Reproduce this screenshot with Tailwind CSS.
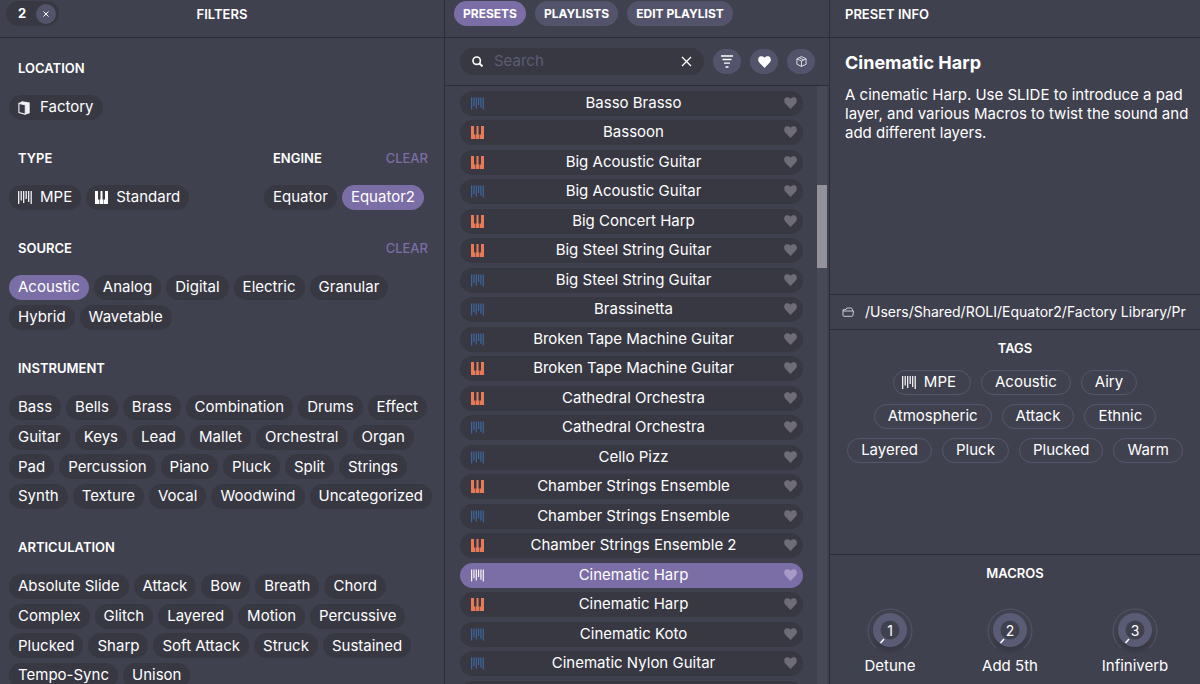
<!DOCTYPE html>
<html lang="en">
<head>
<meta charset="utf-8">
<title>Preset browser</title>
<script src="https://cdn.jsdelivr.net/npm/@tailwindcss/browser@4"></script>
</head>
<body class="h-screen overflow-hidden bg-[#40414e] font-['Inter','Liberation_Sans',sans-serif] text-[15px] text-white">
<svg class="hidden" aria-hidden="true">
  <symbol id="mpe" viewBox="0 0 14 13"><path d="M.7 0v13M3.200 0v9.500M5.700 0v12M8.200 0v8M10.700 0v11M13.200 0v13" stroke="currentColor" stroke-width="1.200" fill="none"/></symbol>
  <symbol id="keys" viewBox="0 0 13 13"><path d="M0 0h3v8.500h1.100V13H0zM5.500 0h2v8.500h1V13H4.600V8.500h.9zM10 0h3v13H9V8.500h1z" fill="currentColor"/></symbol>
  <symbol id="heart" viewBox="0 0 14 13"><path d="M7 13 1.300 7C-.6 4.900-.1 1.700 2 .6 4-.4 6 .3 7 2c1-1.700 3-2.400 5-1.400 2.100 1.100 2.600 4.300.7 6.400z" fill="currentColor"/></symbol>
</svg>
<main class="grid h-full grid-cols-[444fr_386fr_370fr]">
  <section class="flex min-w-0 flex-col overflow-hidden" aria-label="Filters">
    <header class="grid h-[38px] shrink-0 grid-cols-3 border-b border-[#2d2d38] px-[6px] pt-[1px]">
      <div class="flex h-[25px] w-[53px] items-center justify-between rounded-full bg-[#383843] pr-[3px] pl-3 text-[13px] font-bold">
        <span>2</span>
        <button aria-label="Clear all filters" class="grid size-5 place-items-center rounded-full bg-[#53546c]"><svg class="size-[6px]" viewBox="0 0 6 6"><path d="M.5.5l5 5M5.500.5l-5 5" stroke="#fff" stroke-width="1"/></svg></button>
      </div>
      <h2 class="text-center text-[13px] leading-[26px] font-semibold">FILTERS</h2>
    </header>
    <div id="filters" class="flex flex-col gap-7 px-[9px] pt-5"></div>
  </section>

  <section class="flex min-w-0 flex-col overflow-hidden border-x border-[#2d2d38]" aria-label="Presets">
    <nav class="flex h-[38px] shrink-0 gap-[9px] border-b border-[#2d2d38] px-[9px] pt-[1px] text-[12px] font-bold">
      <button class="h-[25px] rounded-full bg-[#7b6da6] px-[9px]">PRESETS</button>
      <button class="h-[25px] rounded-full bg-[#53546c] px-[9px]">PLAYLISTS</button>
      <button class="h-[25px] rounded-full bg-[#53546c] px-[9px]">EDIT PLAYLIST</button>
    </nav>
    <div class="flex h-12 shrink-0 items-center gap-[9px] border-b border-[#2d2d38] pr-[14px] pl-[15px]">
      <div class="flex h-[27px] min-w-0 flex-1 items-center rounded-full bg-[#383843] px-3">
        <svg class="size-[11px] shrink-0" viewBox="0 0 11 11"><circle cx="4.700" cy="4.700" r="3.700" fill="none" stroke="#fff" stroke-width="1.600"/><path d="M7.500 7.500l3 3" stroke="#fff" stroke-width="2"/></svg>
        <input aria-label="Search" placeholder="Search" class="ml-[11px] min-w-0 flex-1 bg-transparent outline-none placeholder:text-[#5b5c73]">
        <button aria-label="Clear search"><svg class="size-[11px]" viewBox="0 0 11 11"><path d="M1 1l9 9M10 1l-9 9" stroke="#fff" stroke-width="1.300"/></svg></button>
      </div>
      <button aria-label="Sort" class="grid h-[25px] w-7 place-items-center rounded-full bg-[#53546c]"><svg class="h-[13px] w-3" viewBox="0 0 12 13"><path d="M0 1h12M1.500 4.500h9M3 8.200h6M4.500 12h3" stroke="#fff" stroke-width="1.300"/></svg></button>
      <button aria-label="Favourites" class="grid h-[25px] w-7 place-items-center rounded-full bg-[#53546c]"><svg class="h-3 w-[13px]"><use href="#heart"/></svg></button>
      <button aria-label="Packs" class="grid h-[25px] w-7 place-items-center rounded-full bg-[#53546c]"><svg class="size-[11px]" viewBox="0 0 12 12"><path d="M6 .6l5 2.400v6L6 11.400 1 9V3zM1 3l5 2.500L11 3M6 5.500v5.900M3.500 1.800l5 2.500" fill="none" stroke="#e6e6ee" stroke-width="1"/></svg></button>
    </div>
    <div class="flex min-h-0 flex-1 overflow-hidden">
      <ul id="presets" class="min-w-0 flex-1 pt-[5px] pr-[14px] pl-[15px]"></ul>
      <div class="mr-[2px] w-[10px] bg-[#484957] pt-[99px]"><div class="h-[83px] bg-[#93929b]"></div></div>
    </div>
  </section>

  <section class="flex min-w-0 flex-col overflow-hidden" aria-label="Preset info">
    <header class="h-[38px] shrink-0 border-b border-[#2d2d38] px-[15px] pt-[1px]"><h2 class="text-[13px] leading-[26px] font-semibold">PRESET INFO</h2></header>
    <div class="h-[257px] shrink-0 border-b border-[#2d2d38] pt-[13px] pr-2 pl-[15px]">
      <h1 class="text-lg leading-6 font-bold">Cinematic Harp</h1>
      <p class="mt-[10px] leading-[19px]">A cinematic Harp. Use SLIDE to introduce a pad layer, and various Macros to twist the sound and add different layers.</p>
    </div>
    <div class="flex h-[35px] shrink-0 items-center gap-[11px] border-b border-[#2d2d38] pl-3">
      <svg class="h-[10px] w-3 shrink-0" viewBox="0 0 12 10"><path d="M1 4V2.800l3-.3.800-1.500h4.700l1 1.500V4M1 4h10.500l-.6 4.500q-.1.800-1 .8H2q-.9 0-1-.8z" fill="none" stroke="#d9d9e2" stroke-width=".9"/></svg>
      <span class="text-sm whitespace-nowrap">/Users/Shared/ROLI/Equator2/Factory Library/Pr</span>
    </div>
    <div class="h-[225px] shrink-0 border-b border-[#2d2d38] px-3 pt-2">
      <h2 class="text-center text-[13px] leading-5 font-semibold">TAGS</h2>
      <div id="tags" class="mt-3 flex flex-col gap-[9px]"></div>
    </div>
    <div class="flex-1 pt-2">
      <h2 class="text-center text-[13px] leading-5 font-semibold">MACROS</h2>
      <div id="macros" class="mt-[22px] grid grid-cols-[120fr_120fr_130fr]"></div>
    </div>
  </section>
</main>
<script>
const filters = [
  [['LOCATION', ['Factory'], 'h-[25px]']],
  [['TYPE', ['MPE', 'Standard'], 'h-[25px]'], ['ENGINE', ['Equator', 'Equator2'], 'h-[25px]']],
  [['SOURCE', ['Acoustic', 'Analog', 'Digital', 'Electric', 'Granular', 'Hybrid', 'Wavetable'], 'h-[55px]']],
  [['INSTRUMENT', ['Bass', 'Bells', 'Brass', 'Combination', 'Drums', 'Effect', 'Guitar', 'Keys', 'Lead', 'Mallet', 'Orchestral', 'Organ', 'Pad', 'Percussion', 'Piano', 'Pluck', 'Split', 'Strings', 'Synth', 'Texture', 'Vocal', 'Woodwind', 'Uncategorized'], 'h-[114px]']],
  [['ARTICULATION', ['Absolute Slide', 'Attack', 'Bow', 'Breath', 'Chord', 'Complex', 'Glitch', 'Layered', 'Motion', 'Percussive', 'Plucked', 'Sharp', 'Soft Attack', 'Struck', 'Sustained', 'Tempo-Sync', 'Unison'], 'h-[114px]']],
];
const icons = {
  Factory: '<svg class="mr-[10px] h-[14px] w-3" viewBox="0 0 12 14"><path d="M.6 2.300 4 .3l7.700 1.200v10.700L7.500 13.500V3.800z" fill="#f2f2f6"/><path d="M.9 2.500l6.400 1.300v9.400L.9 11.600z" fill="#383843" stroke="#f2f2f6" stroke-width="1.100"/></svg>',
  MPE: '<svg class="mr-2 h-[13px] w-[14px]"><use href="#mpe"/></svg>',
  Standard: '<svg class="mr-2 h-[13px] w-[13px]"><use href="#keys"/></svg>',
};
const on = new Set(['Equator2', 'Acoustic']);
const chip = n => `<button aria-pressed="${on.has(n)}" class="flex h-[25px] items-center rounded-full px-[9px] whitespace-nowrap ${on.has(n) ? 'bg-[#7b6da6]' : 'bg-[#383843]'}">${icons[n] || ''}${n}</button>`;
const clears = new Set(['ENGINE', 'SOURCE']);
document.getElementById('filters').innerHTML = filters.map(groups =>
  `<div class="flex justify-between">${groups.map(([h, items, height]) =>
    `<div class="${h === 'ENGINE' ? 'w-[171px]' : h === 'TYPE' ? '' : 'w-full'}"><div class="flex justify-between pr-[7px] pl-[9px] text-[13px] leading-5"><h3 class="font-semibold">${h}</h3>${clears.has(h) ? '<button class="font-medium text-[#7b6da6]">CLEAR</button>' : ''}</div>
    <div class="mt-[17px] flex flex-wrap content-between gap-x-[5px] ${height}">${items.map(chip).join('')}</div></div>`).join('')}</div>`).join('');

const presets = [['m','Basso Brasso'],['k','Bassoon'],['k','Big Acoustic Guitar'],['m','Big Acoustic Guitar'],['k','Big Concert Harp'],['k','Big Steel String Guitar'],['m','Big Steel String Guitar'],['m','Brassinetta'],['m','Broken Tape Machine Guitar'],['k','Broken Tape Machine Guitar'],['k','Cathedral Orchestra'],['m','Cathedral Orchestra'],['m','Cello Pizz'],['k','Chamber Strings Ensemble'],['m','Chamber Strings Ensemble'],['k','Chamber Strings Ensemble 2'],['m','Cinematic Harp'],['k','Cinematic Harp'],['m','Cinematic Koto'],['m','Cinematic Nylon Guitar'],['m','']];
document.getElementById('presets').innerHTML = presets.map(([t, n], i) => {
  const sel = i === 16;
  return `<li class="relative odd:mb-1 even:mb-[5px]"><button class="h-[25px] w-full rounded-full pl-1 ${sel ? 'bg-[#7b6da6]' : 'bg-[#383843]'}">${n}</button>
  <svg class="pointer-events-none absolute top-[6px] left-[11px] h-[13px] w-[13px] ${sel ? 'text-white' : t === 'm' ? 'text-[#3c6ba5]' : 'text-[#e97a55]'}"><use href="${t === 'm' ? '#mpe' : '#keys'}"/></svg>
  <button aria-label="Favourite" class="absolute top-[6px] right-[6px]"><svg class="block h-3 w-[13px] ${sel ? 'text-[#a899c9]' : 'text-[#6e6d77]'}"><use href="#heart"/></svg></button></li>`;
}).join('');

document.getElementById('tags').innerHTML = [['MPE','Acoustic','Airy'],['Atmospheric','Attack','Ethnic'],['Layered','Pluck','Plucked','Warm']].map(row =>
  `<div class="flex justify-center gap-[10px]">${row.map(n => `<span class="flex h-[25px] items-center rounded-full border border-[#55566d] ${n === 'MPE' ? 'pr-[14px] pl-2' : 'px-[13px]'}">${icons[n] || ''}${n}</span>`).join('')}</div>`).join('');

document.getElementById('macros').innerHTML = ['Detune','Add 5th','Infiniverb'].map((n, i) =>
  `<div class="flex flex-col items-center"><svg role="img" aria-label="${n} knob" class="size-[50px]" viewBox="0 0 50 50">
  <defs><radialGradient id="shade${i}"><stop offset=".5" stop-color="#30303b" stop-opacity=".7"/><stop offset="1" stop-color="#30303b" stop-opacity="0"/></radialGradient></defs>
  <ellipse cx="25" cy="33" rx="20" ry="17" fill="url(#shade${i})"/>
  <path d="M11 43A22 22 0 1 1 39 43" fill="none" stroke="#55566b"/>
  <circle cx="25" cy="25" r="17" fill="#5a5c76"/><circle cx="25" cy="25" r="9.500" fill="#40414e"/>
  <path d="M19 34l-3.500 4" stroke="#fff" stroke-width="1.500"/>
  <text x="25" y="31" text-anchor="middle" font-size="14" fill="#fff">${i + 1}</text></svg><span>${n}</span></div>`).join('');
</script>
</body>
</html>
